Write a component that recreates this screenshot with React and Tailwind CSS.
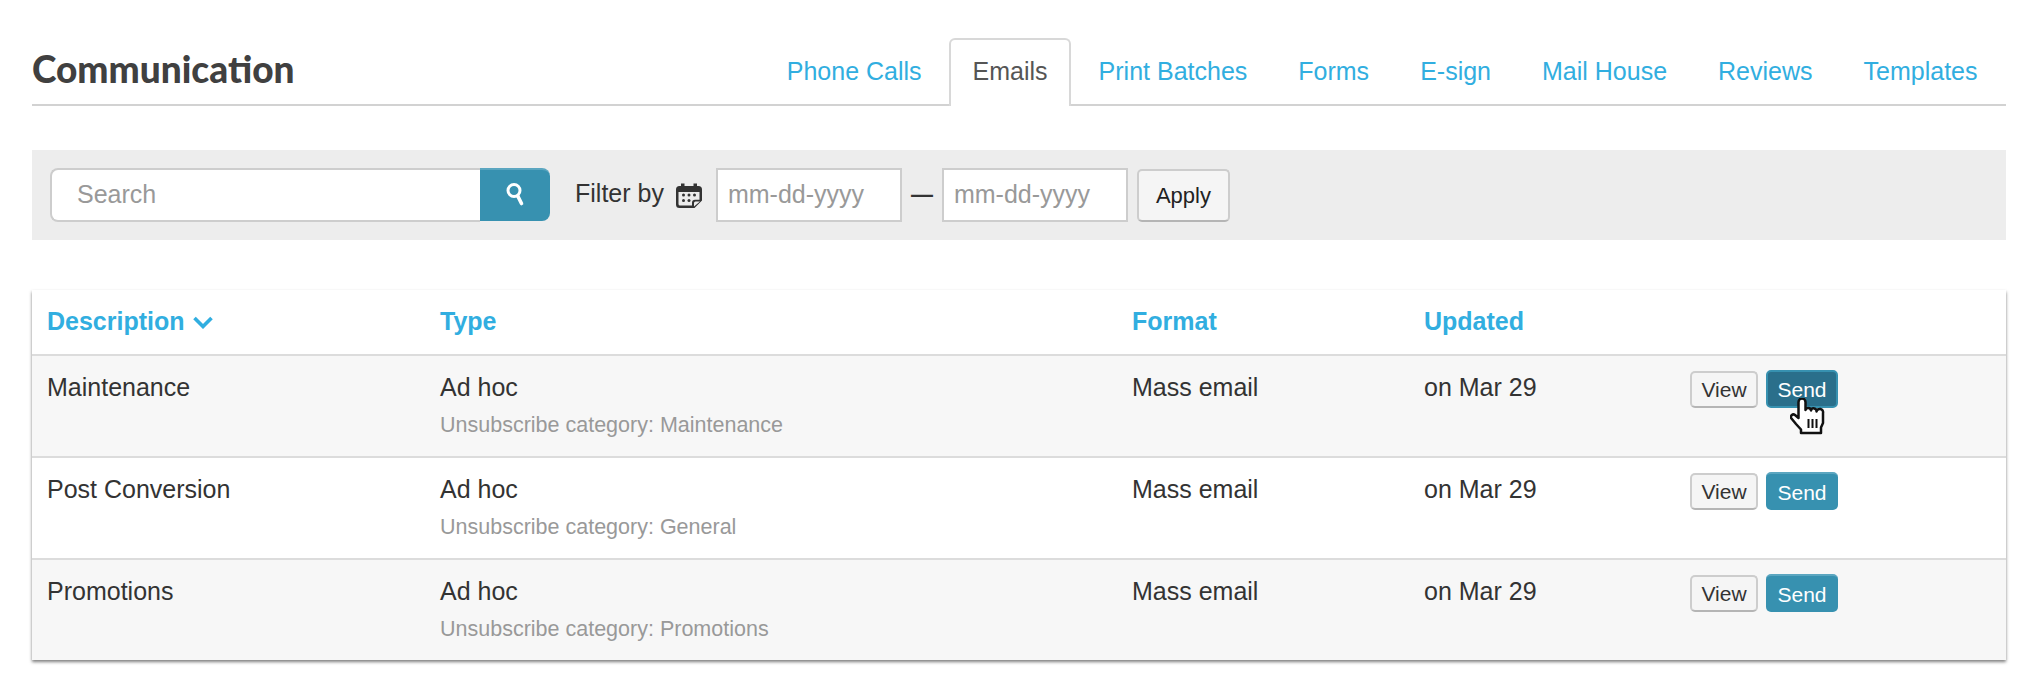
const tabs = ['Phone Calls', 'Emails', 'Print Batches', 'Forms', 'E-sign', 'Mail House', 'Reviews', 'Templates'];

const rows = [
  { name: 'Maintenance', category: 'Maintenance', bg: 'bg-[#f7f7f7]', hover: true },
  { name: 'Post Conversion', category: 'General', bg: 'bg-white' },
  { name: 'Promotions', category: 'Promotions', bg: 'bg-[#f7f7f7]', last: true },
];

const columns = 'grid grid-cols-[393px_692px_292px_266px_1fr] pl-[15px]';

function SearchIcon() {
  return (
    <svg width="18" height="23" viewBox="0 0 18 23" fill="none" stroke="white" strokeLinecap="round">
      <circle cx="8" cy="7.500" r="6" strokeWidth="3" />
      <path d="M12 13.500 L15.500 20.500" strokeWidth="3.600" />
    </svg>
  );
}

function CalendarIcon() {
  return (
    <svg width="26" height="25" viewBox="0 0 26 25">
      <path d="M5 0.500h3.500v2.500h9V0.500H21v2.500h1.500A3.500 3.500 0 0 1 26 6.500v11L18.500 25H3.500A3.500 3.500 0 0 1 0 21.500v-15A3.500 3.500 0 0 1 3.500 3H5z" fill="#333" />
      <path d="M2.500 9h21v7.700h-4.500a3 3 0 0 0-3 3v2.800H4a1.500 1.500 0 0 1-1.500-1.500z" fill="#ececec" />
      <path d="M18 23.500v-3.500a1.500 1.500 0 0 1 1.500-1.500H24z" fill="#ececec" />
      <g fill="#333">
        <circle cx="7.500" cy="12" r="1.500" />
        <circle cx="13" cy="12" r="1.500" />
        <circle cx="18.500" cy="12" r="1.500" />
        <circle cx="7.500" cy="17.500" r="1.500" />
        <circle cx="13" cy="17.500" r="1.500" />
      </g>
    </svg>
  );
}

function Chevron() {
  return (
    <svg width="20" height="13" viewBox="0 0 20 13" fill="none" stroke="#31aee0" strokeWidth="3.600">
      <path d="M1.500 2 L10 10.500 L18.500 2" />
    </svg>
  );
}

function HandCursor() {
  return (
    <svg width="35" height="37" viewBox="0 0 35 37" strokeLinejoin="round">
      <path
        d="M8.500 4a3.500 3.500 0 0 1 7 0v8a2.800 2.800 0 0 1 5.500 .5a2.800 2.800 0 0 1 5.500 1a2.800 2.800 0 0 1 6.500 1.500V25l-2 4.500v5.500H11V31.500L6 26 1.500 20.500a2.500 2.500 0 0 1 3.500-3.500L8.500 20z"
        fill="white"
        stroke="#111"
        strokeWidth="2.500"
      />
      <path d="M18.500 21v9M22.500 21v9M26.500 21v9" stroke="#111" strokeWidth="2" />
    </svg>
  );
}

function DateInput() {
  return (
    <input
      placeholder="mm-dd-yyyy"
      className="w-[186px] h-[54px] pb-[2px] bg-white border-2 border-[#cdcdcd] px-[10px] text-[25px] placeholder:text-[#999] outline-none"
    />
  );
}

export default function App() {
  return (
    <div className="min-h-screen bg-white pl-[32px] pr-[18px] pt-[38px] font-['Liberation_Sans',Arial,sans-serif] text-[25px] text-[#333]">
      <div className="flex items-center justify-between h-[68px] border-b-2 border-[#d2d2d2]">
        <h1 className="font-['Lato',sans-serif] font-black text-[37px] text-[#404040] mt-[-4px]">Communication</h1>
        <div className="flex self-start pr-[3px]">
          {tabs.map((tab) =>
            tab === 'Emails' ? (
              <div key={tab} className="h-[68px] mx-[2px] px-[21.500px] pt-[13px] bg-white border-2 border-b-0 border-[#d8d8d8] rounded-t-[6px] text-[#555]">
                {tab}
              </div>
            ) : (
              <a key={tab} className="h-[66px] mx-[2px] px-[23.500px] pt-[15px] text-[#31aee0]">
                {tab}
              </a>
            )
          )}
        </div>
      </div>

      <div className="flex items-center h-[90px] mt-[44px] pl-[18px] bg-[#ededed]">
        <input
          placeholder="Search"
          className="w-[430px] h-[54px] pb-[2px] bg-white border-2 border-r-0 border-[#cdcdcd] rounded-l-[8px] pl-[25px] text-[25px] placeholder:text-[#999] outline-none"
        />
        <button className="flex items-center justify-center w-[70px] h-[53px] mb-[1px] pb-[3px] bg-[#3791b0] border-t-2 border-[#5ba6c0] rounded-r-[8px]">
          <SearchIcon />
        </button>
        <span className="ml-[25px] mb-[3px]">Filter by</span>
        <span className="ml-[12px] mt-[1px]">
          <CalendarIcon />
        </span>
        <span className="ml-[14px]">
          <DateInput />
        </span>
        <span className="w-[40px] text-center text-[22px] font-bold mt-[-1px]">—</span>
        <DateInput />
        <button className="ml-[9px] w-[93px] h-[53px] bg-[#f5f5f5] border-2 border-[#cdcdcd] border-b-[#b5b5b5] rounded-[5px] text-[22px] text-[#222]">
          Apply
        </button>
      </div>

      <div className="mt-[50px] shadow-[0_2px_3px_rgba(0,0,0,0.5)]">
        <div className={`${columns} h-[66px] items-center bg-white border-b-2 border-[#dcdcdc] font-bold text-[#31aee0]`}>
          <div className="flex items-center gap-[8px]">
            Description <Chevron />
          </div>
          <div>Type</div>
          <div>Format</div>
          <div>Updated</div>
          <div />
        </div>
        {rows.map((row) => (
          <div key={row.name} className={`${columns} ${row.bg} ${row.last ? 'h-[100px]' : 'h-[102px] border-b-2 border-[#dcdcdc]'}`}>
            <div className="pt-[13px] leading-[36px]">{row.name}</div>
            <div className="pt-[13px]">
              <div className="leading-[36px]">Ad hoc</div>
              <div className="mt-[5px] text-[21.500px] leading-[30px] text-[#999]">Unsubscribe category: {row.category}</div>
            </div>
            <div className="pt-[13px] leading-[36px]">Mass email</div>
            <div className="pt-[13px] leading-[36px]">on Mar 29</div>
            <div className="flex items-start gap-[8px] pt-[14px] text-[21px]">
              <button className="w-[68px] h-[37px] mt-[1px] bg-[#f5f5f5] border-2 border-[#cdcdcd] border-b-[#b5b5b5] rounded-[5px] text-[#333] leading-none">
                View
              </button>
              <div className="relative">
                {row.hover ? (
                  <button className="w-[72px] h-[38px] bg-[#2a6f8b] border-2 border-[#3791b0] rounded-[5px] text-white leading-none">Send</button>
                ) : (
                  <button className="w-[72px] h-[38px] bg-[#3791b0] border-t-2 border-[#5ba6c0] rounded-[5px] text-white leading-none">Send</button>
                )}
                {row.hover && (
                  <div className="absolute left-[24px] top-[28px]">
                    <HandCursor />
                  </div>
                )}
              </div>
            </div>
          </div>
        ))}
      </div>
    </div>
  );
}
